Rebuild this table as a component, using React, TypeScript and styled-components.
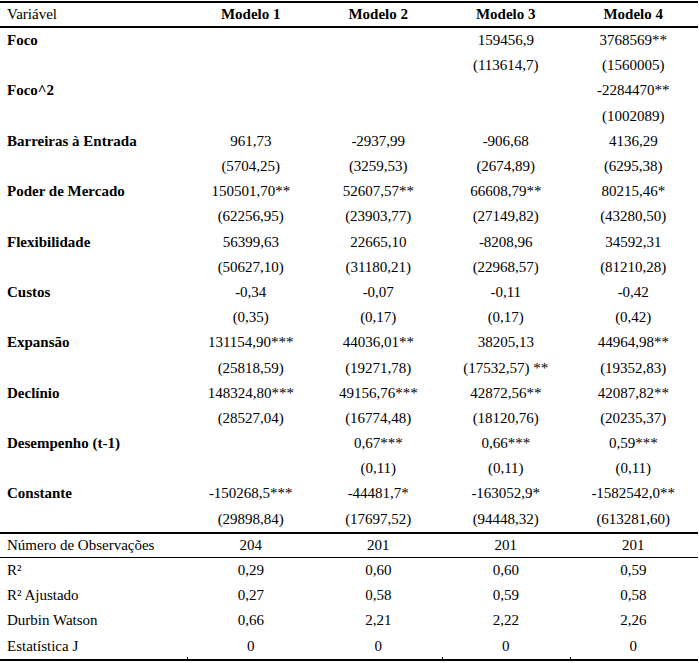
import React, { FC } from 'react'
import styled, { createGlobalStyle } from 'styled-components'

type Variable = {
  name: string
  coef: string[]
  se: string[]
}

const variables: Variable[] = [
  { name: 'Foco', coef: ['', '', '159456,9', '3768569**'], se: ['', '', '(113614,7)', '(1560005)'] },
  { name: 'Foco^2', coef: ['', '', '', '-2284470**'], se: ['', '', '', '(1002089)'] },
  {
    name: 'Barreiras à Entrada',
    coef: ['961,73', '-2937,99', '-906,68', '4136,29'],
    se: ['(5704,25)', '(3259,53)', '(2674,89)', '(6295,38)'],
  },
  {
    name: 'Poder de Mercado',
    coef: ['150501,70**', '52607,57**', '66608,79**', '80215,46*'],
    se: ['(62256,95)', '(23903,77)', '(27149,82)', '(43280,50)'],
  },
  {
    name: 'Flexibilidade',
    coef: ['56399,63', '22665,10', '-8208,96', '34592,31'],
    se: ['(50627,10)', '(31180,21)', '(22968,57)', '(81210,28)'],
  },
  {
    name: 'Custos',
    coef: ['-0,34', '-0,07', '-0,11', '-0,42'],
    se: ['(0,35)', '(0,17)', '(0,17)', '(0,42)'],
  },
  {
    name: 'Expansão',
    coef: ['131154,90***', '44036,01**', '38205,13', '44964,98**'],
    se: ['(25818,59)', '(19271,78)', '(17532,57) **', '(19352,83)'],
  },
  {
    name: 'Declínio',
    coef: ['148324,80***', '49156,76***', '42872,56**', '42087,82**'],
    se: ['(28527,04)', '(16774,48)', '(18120,76)', '(20235,37)'],
  },
  {
    name: 'Desempenho (t-1)',
    coef: ['', '0,67***', '0,66***', '0,59***'],
    se: ['', '(0,11)', '(0,11)', '(0,11)'],
  },
  {
    name: 'Constante',
    coef: ['-150268,5***', '-44481,7*', '-163052,9*', '-1582542,0**'],
    se: ['(29898,84)', '(17697,52)', '(94448,32)', '(613281,60)'],
  },
]

const stats: { name: string; values: string[] }[] = [
  { name: 'R²', values: ['0,29', '0,60', '0,60', '0,59'] },
  { name: 'R² Ajustado', values: ['0,27', '0,58', '0,59', '0,58'] },
  { name: 'Durbin Watson', values: ['0,66', '2,21', '2,22', '2,26'] },
  { name: 'Estatística J', values: ['0', '0', '0', '0'] },
]

const GlobalStyle = createGlobalStyle`
  body {
    margin: 0;
    background: #ffffff;
    font-family: "Liberation Serif", "Times New Roman", serif;
    color: #000000;
  }
`

const App: FC = () => {
  return (
    <>
      <GlobalStyle />
      <Table>
        <Row $height={23} $rule={2}>
          <Label>Variável</Label>
          {[1, 2, 3, 4].map((n) => (
            <HeadCell key={n}>Modelo {n}</HeadCell>
          ))}
        </Row>
        <Body>
          {variables.map((v, i) => (
            <React.Fragment key={v.name}>
              <Row $height={25.2}>
                <Label $bold>{v.name}</Label>
                {v.coef.map((c, j) => (
                  <Value key={j}>{c}</Value>
                ))}
              </Row>
              <Row $height={25.2} $rule={i === variables.length - 1 ? 2 : 0}>
                <Label />
                {v.se.map((s, j) => (
                  <Value key={j}>{s}</Value>
                ))}
              </Row>
            </React.Fragment>
          ))}
        </Body>
        <Row $height={23} $rule={1}>
          <Label>Número de Observações</Label>
          {['204', '201', '201', '201'].map((n, j) => (
            <Value key={j}>{n}</Value>
          ))}
        </Row>
        {stats.map((s, i) => (
          <Row key={s.name} $height={25.25} $rule={i === stats.length - 1 ? 2 : 0}>
            <Label>{s.name}</Label>
            {s.values.map((val, j) => (
              <Value key={j} $tick={i === stats.length - 1 && j !== 1}>
                {val}
              </Value>
            ))}
          </Row>
        ))}
      </Table>
    </>
  )
}

const Table = styled.div`
  width: 698px;
  margin-top: 1px;
  border-top: 2px solid #000000;
  display: flex;
  flex-direction: column;
`

const Body = styled.div`
  display: flex;
  flex-direction: column;
`

const Row = styled.div<{ $height: number; $rule?: number }>`
  display: grid;
  grid-template-columns: 187px repeat(4, 127.5px);
  height: ${({ $height }) => $height}px;
  align-items: center;
  font-size: 15px;
  line-height: 1;
  border-bottom: ${({ $rule }) => ($rule ? `${$rule}px solid #000000` : 'none')};
`

const Label = styled.div<{ $bold?: boolean }>`
  padding-left: 7px;
  font-weight: ${({ $bold }) => ($bold ? 'bold' : 'normal')};
  white-space: nowrap;
`

const HeadCell = styled.div`
  text-align: center;
  font-weight: bold;
  white-space: nowrap;
`

const Value = styled.div<{ $tick?: boolean }>`
  position: relative;
  height: 100%;
  display: flex;
  align-items: center;
  justify-content: center;
  white-space: nowrap;

  &::after {
    content: '';
    display: ${({ $tick }) => ($tick ? 'block' : 'none')};
    position: absolute;
    left: 0;
    bottom: 0;
    width: 1px;
    height: 2px;
    background: #000000;
  }
`

export default App
